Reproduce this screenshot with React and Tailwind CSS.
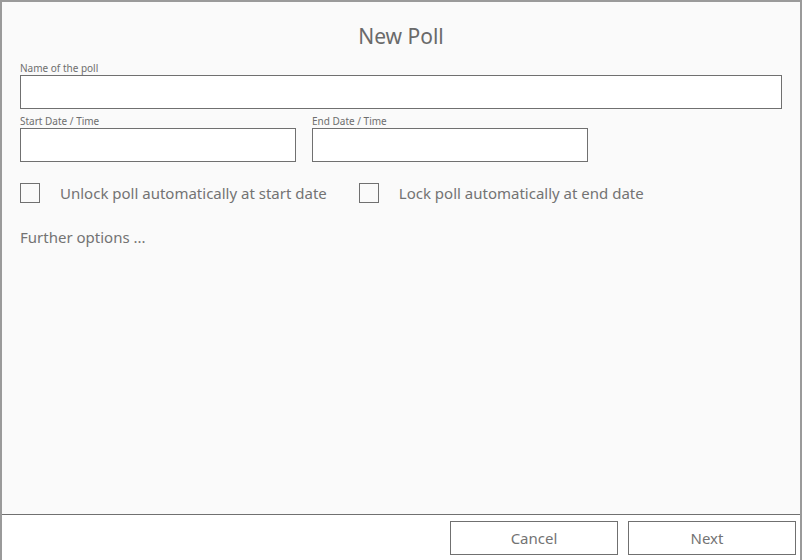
export default function App() {
  return (
    <div className="w-[802px] h-[560px] bg-[#fafafa] border-x-2 border-t-2 border-[#9a9a9a] flex flex-col font-['Noto_Sans',sans-serif] text-[#6e6e6e] overflow-hidden">
      <div className="flex-1 px-[18px]">
        <h1 className="mt-[20px] text-center text-[21px] leading-[28px] font-normal text-[#6a6a6a]">New Poll</h1>
        <label className="block mt-[12px] text-[10px] leading-[13px]">Name of the poll</label>
        <div className="h-[34px] w-[762px] bg-white border border-[#707070]" />
        <div className="flex gap-[16px]">
          <div>
            <label className="block mt-[6px] text-[10px] leading-[13px]">Start Date / Time</label>
            <div className="h-[34px] w-[276px] bg-white border border-[#707070]" />
          </div>
          <div>
            <label className="block mt-[6px] text-[10px] leading-[13px]">End Date / Time</label>
            <div className="h-[34px] w-[276px] bg-white border border-[#707070]" />
          </div>
        </div>
        <div className="mt-[21px] flex items-center h-[20px] text-[15px] text-[#737373]">
          <div className="w-[20px] h-[20px] border border-[#707070]" />
          <span className="ml-[20px]">Unlock poll automatically at start date</span>
          <div className="ml-[32px] w-[20px] h-[20px] border border-[#707070]" />
          <span className="ml-[20px]">Lock poll automatically at end date</span>
        </div>
        <div className="mt-[24px] text-[15px] leading-[20px] text-[#737373]">Further options ...</div>
      </div>
      <div className="h-[46px] bg-white border-t border-[#707070] flex justify-end gap-[10px] pt-[6px] pr-[4px]">
        <button className="w-[168px] h-[34px] border border-[#707070] text-[15px] text-[#737373]">Cancel</button>
        <button className="w-[168px] h-[34px] border border-[#707070] pr-[10px] text-[15px] text-[#737373]">Next</button>
      </div>
    </div>
  );
}
